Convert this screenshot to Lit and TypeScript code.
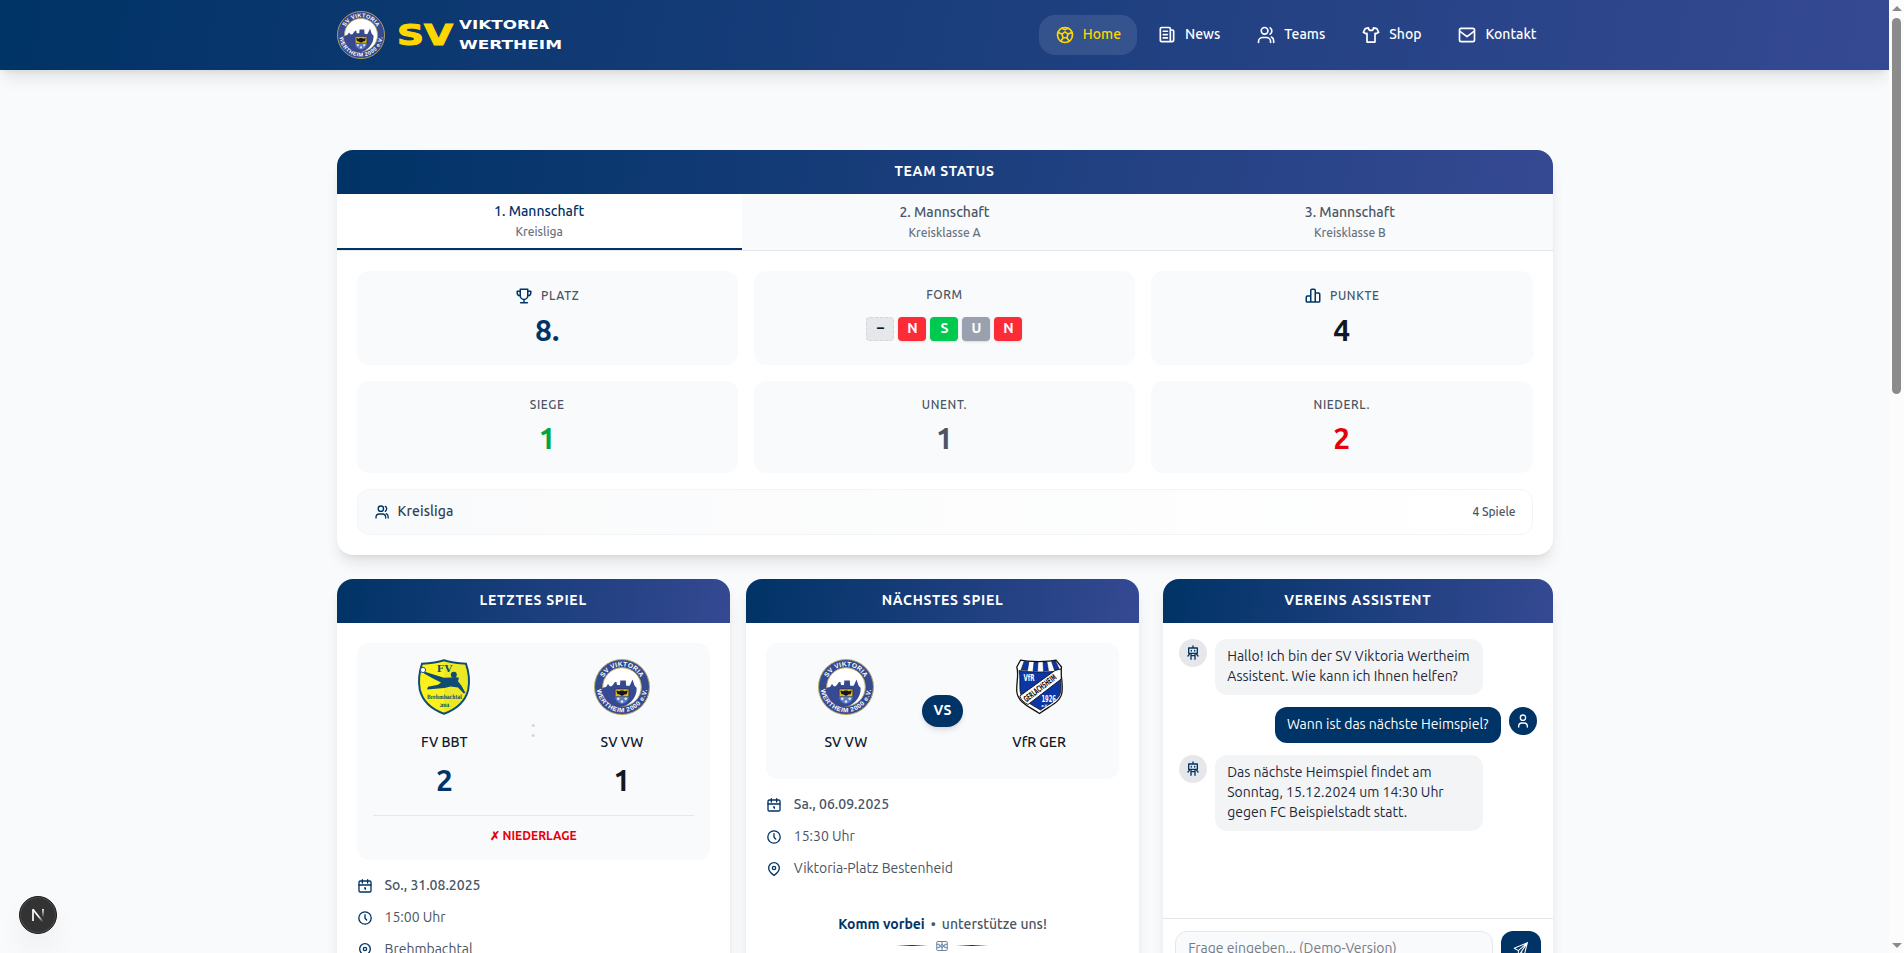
import { LitElement, html, svg, css } from "lit";
import { customElement } from "lit/decorators.js";

const GLYPHS = {
  ball: svg`<circle cx="12" cy="12" r="9"/><path d="M12 8.200 15.700 10.900l-1.400 4.400H9.700L8.300 10.900z"/><path d="M15.700 10.900l4.300-2M14.300 15.300l2.400 3.700M9.700 15.300l-2.400 3.700M8.300 10.900 4 8.900M8.300 4 12 5.600 15.700 4"/>`,
  news: svg`<path d="M16 20H5.500A1.500 1.500 0 0 1 4 18.500V4.500A1.500 1.500 0 0 1 5.500 3h9A1.500 1.500 0 0 1 16 4.500V20zM16 6h2.500A1.500 1.500 0 0 1 20 7.500V18a2 2 0 0 1-2 2h-3M7.500 7.500h5M7.500 11.500h5M7.500 15.500h5"/>`,
  group: svg`<circle cx="10.300" cy="7" r="4"/><path d="M3 21v-1a5 5 0 0 1 5-5h4.500a5 5 0 0 1 5 5v1M17 3.500a4.500 4.500 0 0 1 0 7.500M18.500 14.500a5 5 0 0 1 2.700 4.500v2"/>`,
  shirt: svg`<path d="M9 3.500 5 4.300 2.800 8.800l3.200 1.700L7.200 10V20.500h9.600V10l1.200.5 3.200-1.700L19 4.300l-4-.8a3 3 0 0 1-6 0z"/>`,
  mail: svg`<rect x="3" y="4" width="18" height="16" rx="2"/><path d="m4 8 8 6 8-6"/>`,
  trophy: svg`<path d="M7 3h10v8.500a5 5 0 0 1-10 0zM7 5.500H3v2.500A3.500 3.500 0 0 0 6.500 11.500H7M17 5.500h4v2.500a3.500 3.500 0 0 1-3.500 3.500H17M12 16.500V21M7.500 21h9"/>`,
  chart: svg`<path d="M9 20V4.500A1.500 1.500 0 0 1 10.500 3h3A1.500 1.500 0 0 1 15 4.500V20M9 12H4.500A1.500 1.500 0 0 0 3 13.500v5A1.500 1.500 0 0 0 4.500 20h15a1.500 1.500 0 0 0 1.500-1.500v-9A1.500 1.500 0 0 0 19.500 8H15"/>`,
  calendar: svg`<rect x="3" y="4.500" width="18" height="16.500" rx="2"/><path d="M3 10.500h18M8 2.500v5M16 2.500v5M11.300 15h1.200v2"/>`,
  clock: svg`<circle cx="12" cy="12" r="9.300"/><path d="M12 7V12.500l2.500 2.500"/>`,
  pin: svg`<path d="M12 21.500c4-2.700 8-6.500 8-11a8 8 0 0 0-16 0c0 4.500 4 8.300 8 11z"/><circle cx="12" cy="10.500" r="2.500"/>`,
  user: svg`<circle cx="12" cy="7" r="4"/><path d="M5.500 21v-1a5 5 0 0 1 5-5h3a5 5 0 0 1 5 5v1"/>`,
  robot: svg`<path d="M12 1.500v3M5.500 4.500h13v8h-13zM9.500 8v1M14.500 8v1M9 13v8.500M15 13v8.500M9 16h6M6.500 14 4.500 16.500M17.500 14l2 2.500"/>`,
  send: svg`<path d="M20.500 3.500 3 11l5.500 3.200zM20.500 3.500 16.500 19.500l-4.500-3zM20.500 3.500l-12 10.700v6l3.500-3.700"/>`,
  field: svg`<rect x="1.500" y="3" width="21" height="18" rx="1.500"/><path d="M12 3v18M2 8.500h4.500v7H2M22 8.500h-4.500v7h4.500"/><circle cx="12" cy="12" r="3"/>`,
};
type Glyph = keyof typeof GLYPHS;

const icon = (name: Glyph, size = 16, weight = 2) => html`
  <svg class="icon" width=${size} height=${size} viewBox="0 0 24 24" fill="none" stroke="currentColor"
    stroke-width=${weight} stroke-linecap="round" stroke-linejoin="round">${GLYPHS[name]}</svg>`;

const viktoriaCrest = (size: number) => html`
  <svg class="icon" width=${size} height=${size} viewBox="0 0 56 56">
    <defs>
      <path id="arc-top" d="M7.300 28a20.700 20.700 0 0 1 41.400 0"/>
      <path id="arc-bottom" d="M2.800 28a25.200 25.200 0 0 0 50.400 0"/>
    </defs>
    <circle cx="28" cy="28" r="27.500" fill="#364a91" stroke="#b5ab62" stroke-width="1"/>
    <circle cx="28" cy="28" r="19.300" fill="#fff" stroke="#b5ab62" stroke-width="1"/>
    <path fill="#364a91" d="M9.500 28.500 12 28l2-3 2 2.500 2-.5 3-4 1.500 0 .5 3h3l.3-4.500h5.500l.3 5 3 .5 1.200-1.500 2.200-5 2 6 2.200 2.500a18.800 18.800 0 0 1-37.400 3z"/>
    <path fill="#e0b91f" stroke="#1a1a1a" stroke-width=".5" d="M21.200 30h13.600v7.500H21.200z"/>
    <path fill="#15151c" d="m22.300 31.500 3.200.8 1-.8h3l1 .8 3.200-.8-1 3.600-2.200.4L28 37l-2.500-1.500-2.200-.4z"/>
    <path fill="#5f7dc0" d="M21.200 37.500h13.600c0 4-3 6.500-6.800 7.500-3.800-1-6.800-3.500-6.800-7.500z"/>
    <g fill="#dfe6f5"><circle cx="24.300" cy="39.800" r="1.300"/><circle cx="31.700" cy="39.800" r="1.300"/><circle cx="28" cy="42.500" r="1.300"/></g>
    <g class="crest-text" fill="#fff">
      <text font-size="6.600"><textPath href="#arc-top" startOffset="50%" text-anchor="middle" textLength="45">SV VIKTORIA</textPath></text>
      <text font-size="6.400"><textPath href="#arc-bottom" startOffset="50%" text-anchor="middle" textLength="73">WERTHEIM 2000 e.V.</textPath></text>
    </g>
  </svg>`;

const brehmbachtalCrest = () => html`
  <svg class="icon" width="56" height="56" viewBox="0 0 56 56">
    <path fill="#fbf21c" stroke="#0f4c75" stroke-width="2" d="M28 1.200c7 2.200 14 3 22 3.600 2.800 8 3.800 17 2.200 26C49.500 42 41 50 28 54.800 15 50 6.500 42 3.800 30.800 2.200 22 3.200 13 6 4.800 14 4.200 21 3.400 28 1.200z"/>
    <path fill="#d8db33" opacity=".45" d="M28 2.500c7 2 13.500 3 21 3.400 2.600 8 3.600 16 2 24.500C48.500 41 41 48.500 28 53.500z"/>
    <g fill="#0f4c75">
      <path d="m8 12.500 20 6.200 7-.2 3.500-.5 4.500.8-1 3.500 3.500 4.500 3.800 7-1.500.8L42 28.500l-7.500-1-6 1.500-17.500 1.500 1-2.800 10-2L25 23.500l-8-4-9-5z"/>
      <circle cx="37.800" cy="15.800" r="3"/>
    </g>
    <circle cx="7" cy="11" r="2.600" fill="#fff" stroke="#31507e" stroke-width="1"/>
    <g class="serif" fill="#0f4c75" text-anchor="middle" font-weight="700">
      <text x="28.500" y="12.800" font-size="10" textLength="15.500">FV</text>
      <text x="28.500" y="39.500" font-size="6" textLength="35" lengthAdjust="spacingAndGlyphs">Brehmbachtal</text>
      <text x="28.500" y="47.500" font-size="4.500" textLength="10">2014</text>
    </g>
  </svg>`;

const gerlachsheimCrest = () => html`
  <svg class="icon" width="56" height="56" viewBox="0 0 56 56">
    <path fill="#fff" stroke="#111" stroke-width="1.300" d="M9.500 1.200C17 3 38 3 45 1.200L50.500 8c-1.500 7 1.500 14 .6 24C50.500 43 40 46 28.500 54.500 17 47 6.500 43 5.700 32 5.500 22 8 15 5.800 8z"/>
    <path fill="#0a36a6" stroke="#111" stroke-width=".8" d="M8 11.500c12 2 30 2 41 0-.5 7 1.500 12 .8 20C49 41 40 43.500 29.500 51 19 44.500 9.500 41 9 31.500 8.500 24 9.500 18 8 11.500z"/>
    <g fill="#0a36a6" stroke="#111" stroke-width=".5"><path d="M13 2.500h5l-1.500 9L10 11zM23 3h4l-.5 9.300h-4.500zM32 3h4l1.500 8.800-5 .5zM40.500 2.600l4-.8 4 8.700-5 .8z"/></g>
    <path fill="#fff" stroke="#111" stroke-width=".9" d="M8.800 37 44 11.500l6-1.500.2 10L17 45.500c-4-2-7-4.500-8.200-8.500z"/>
    <text class="narrow" transform="translate(15.500 43.500) rotate(-38)" font-size="8.500" textLength="39" lengthAdjust="spacingAndGlyphs" fill="#111">GERLACHSHEIM</text>
    <g class="narrow" fill="#fff"><text x="12.500" y="22" font-size="8.500" textLength="11" lengthAdjust="spacingAndGlyphs">VfR</text>
    <text x="30.500" y="43" font-size="8.500" textLength="14.500" lengthAdjust="spacingAndGlyphs">1926</text><text x="30.500" y="47.500" font-size="3.500">e.V.</text></g>
  </svg>`;

const NAV: { label: string; glyph: Glyph; active?: boolean }[] = [
  { label: "Home", glyph: "ball", active: true },
  { label: "News", glyph: "news" },
  { label: "Teams", glyph: "group" },
  { label: "Shop", glyph: "shirt" },
  { label: "Kontakt", glyph: "mail" },
];

const TEAMS = [
  { name: "1. Mannschaft", league: "Kreisliga", active: true },
  { name: "2. Mannschaft", league: "Kreisklasse A", active: false },
  { name: "3. Mannschaft", league: "Kreisklasse B", active: false },
];

const FORM = [
  { mark: "–", kind: "none" },
  { mark: "N", kind: "loss" },
  { mark: "S", kind: "win" },
  { mark: "U", kind: "draw" },
  { mark: "N", kind: "loss" },
];

const CHAT = [
  { from: "bot", text: "Hallo! Ich bin der SV Viktoria Wertheim Assistent. Wie kann ich Ihnen helfen?" },
  { from: "me", text: "Wann ist das nächste Heimspiel?" },
  { from: "bot", text: "Das nächste Heimspiel findet am Sonntag, 15.12.2024 um 14:30 Uhr gegen FC Beispielstadt statt." },
];

@customElement("app-root")
export class AppRoot extends LitElement {
  static styles = css`
    :host { display: flex; height: 100vh; overflow: hidden; position: relative; background: #f9fafc;
      font-family: Ubuntu, "Noto Sans", sans-serif; font-size: 14px; line-height: 20px; color: #101828; }
    * { box-sizing: border-box; }
    .icon { display: block; flex: none; overflow: visible; }
    .crest-text { font-family: "Liberation Sans", sans-serif; font-weight: 700; }
    .serif { font-family: "DejaVu Serif", serif; }
    .narrow { font-family: "DejaVu Sans Condensed", sans-serif; font-weight: 700; }
    .view { flex: 1; min-width: 0; height: 100%; overflow: hidden; }
    .wrap { width: 1216px; margin: 0 auto; }
    .top { background: linear-gradient(100deg, #003366, #354992); height: 70px;
      box-shadow: 0 10px 15px -3px rgba(0,0,0,.1), 0 4px 6px -4px rgba(0,0,0,.1); }
    .top .wrap { height: 100%; display: flex; align-items: center; justify-content: space-between; }
    .brand { display: flex; align-items: center; gap: 12px; }
    .wordmark { display: block; font-family: "DejaVu Sans", sans-serif; font-weight: 700; }
    .nav { display: flex; gap: 4px; }
    .nav-item { display: flex; align-items: center; gap: 8px; height: 40px; padding: 0 16px; border-radius: 16px;
      color: #fff; font-weight: 500; }
    .nav-item .label { line-height: 20px; padding-bottom: 2px; }
    .nav-item.active { background: rgba(255,255,255,.1); color: #ffd700; }
    .content { padding-top: 80px; display: flex; flex-direction: column; gap: 24px; }
    .card { background: #fff; border-radius: 16px; overflow: hidden;
      box-shadow: 0 10px 15px -3px rgba(0,0,0,.1), 0 4px 6px -4px rgba(0,0,0,.1); }
    .card-title { background: linear-gradient(100deg, #003366, #354992); color: #fff; height: 44px; padding: 11px 0 13px;
      text-align: center; font-weight: 700; letter-spacing: .7px; text-transform: uppercase; }
    .tabs { display: grid; grid-template-columns: repeat(3, 1fr); border-bottom: 1px solid #e5e7eb; }
    .tab { height: 56px; padding-top: 8px; background: #f9fafb; text-align: center; color: #4a5565; font-weight: 500; }
    .tab.active { background: #fff; color: #003366; border-bottom: 2px solid #003366; padding-top: 7px; }
    .tab .league { font-size: 12px; line-height: 16px; margin-top: 3px; color: #6a7282; }
    .status { padding: 20px; display: grid; grid-template-columns: repeat(3, 1fr); gap: 16px; }
    .stat { background: #f9fafb; border-radius: 12px; padding: 16px; display: flex; flex-direction: column; align-items: center; gap: 8px; }
    .stat-label { display: flex; align-items: center; gap: 8px; font-size: 12px; line-height: 16px; letter-spacing: .6px; color: #4a5565; font-weight: 500; }
    .stat-label .icon { color: #003366; }
    .value { height: 36px; display: flex; align-items: center; font-size: 30px; line-height: 36px; font-weight: 700; padding-bottom: 2px; }
    .navy { color: #003366; } .green { color: #00a63e; } .gray { color: #4a5565; } .red { color: #e7000b; }
    .form { gap: 4px; font-size: 14px; line-height: 20px; padding: 0; }
    .mark { width: 28px; height: 24px; border-radius: 4px; display: flex; align-items: center; justify-content: center; color: #fff;
      padding-bottom: 2px; box-shadow: 0 1px 3px rgba(0,0,0,.1), 0 1px 2px -1px rgba(0,0,0,.1); }
    .mark.none { background: #e5e7eb; border: 1px dashed #d1d5dc; color: #101828; box-shadow: none; }
    .mark.loss { background: #fb2c36; } .mark.win { background: #00c950; } .mark.draw { background: #99a1af; }
    .league-row { grid-column: 1 / -1; height: 46px; padding: 0 16px; border: 1px solid #f3f4f6; border-radius: 12px; display: flex; align-items: center;
      background: linear-gradient(90deg, #f9fafb, #fff); gap: 8px; color: #364153; font-weight: 500; }
    .league-row .icon { color: #003366; }
    .league-row .name { flex: 1; padding-bottom: 2px; letter-spacing: .1px; }
    .league-row .games { font-size: 12px; color: #4a5565; }
    .columns { display: grid; grid-template-columns: 802.67px 1fr; gap: 24px; }
    .games-pair { display: grid; grid-template-columns: 1fr 1fr; gap: 16px; }
    .columns .card { height: 480px; }
    .match { padding: 20px; display: flex; flex-direction: column; gap: 16px; }
    .versus { background: #f9fafb; border-radius: 12px; padding: 16px; }
    .sides { display: flex; align-items: center; }
    .side { flex: 1; display: flex; flex-direction: column; align-items: center; }
    .side .name { margin: 17px 0 11px; font-weight: 500; }
    .side .score { font-size: 30px; line-height: 36px; font-weight: 700; margin: -1px 0 17px; }
    .colon { width: 34px; text-align: center; font-size: 24px; line-height: 32px; color: #d1d5dc; margin-bottom: 16px; }
    .vs { margin: 0 12px; width: 41px; height: 32px; border-radius: 16px; background: #003366; color: #fff; font-weight: 700; text-align: center;
      padding: 5px 0 7px; box-shadow: 0 4px 6px -1px rgba(0,0,0,.1), 0 2px 4px -2px rgba(0,0,0,.1); }
    .result { border-top: 1px solid #e5e7eb; padding-top: 12px; text-align: center; font-size: 12px; line-height: 16px; font-weight: 700; color: #e7000b; }
    .facts { display: flex; flex-direction: column; gap: 12px; color: #4a5565; }
    .fact { display: flex; align-items: center; gap: 12px; height: 20px; }
    .fact .icon { color: #003366; }
    .fact .text { padding-bottom: 2px; }
    .fact.strong { font-weight: 500; }
    .call { display: flex; justify-content: center; gap: 6px; margin-top: 19px; font-weight: 500; color: #4a5565; }
    .call b { font-weight: 700; color: #003366; }
    .rule { display: flex; align-items: center; justify-content: center; gap: 8px; margin-top: -11px; height: 13px; color: #003366; }
    .rule .line { width: 32px; height: 1px; background: linear-gradient(90deg, transparent, #003366, transparent); }
    .rule .icon { opacity: .6; }
    .assistant { display: flex; flex-direction: column; }
    .chat { height: 295px; padding: 16px; display: flex; flex-direction: column; gap: 12px; }
    .msg { display: flex; gap: 8px; align-items: flex-start; }
    .msg.me { flex-direction: row-reverse; }
    .avatar { width: 28px; height: 28px; border-radius: 50%; flex: none; background: #e5e7eb; color: #003366; display: flex; align-items: center; justify-content: center; }
    .me .avatar { background: #003366; color: #fff; }
    .bubble { max-width: 268px; border-radius: 12px; padding: 7px 12px 9px; background: #f3f4f6; color: #1e2939; }
    .me .bubble { background: #003366; color: #fff; }
    .ask { border-top: 1px solid #e5e7eb; padding: 12px; display: flex; gap: 8px; }
    .input { flex: 1; height: 36px; border: 1px solid #e5e7eb; border-radius: 12px; background: #f9fafb; padding: 6px 12px; color: #757b87; }
    .send { width: 40px; height: 36px; border-radius: 12px; background: #003366; color: #fff; display: flex; align-items: center; justify-content: center; }
    .scrollbar { width: 15px; background: #fcfcfc; display: flex; flex-direction: column; align-items: center; padding: 6px 0 5px; }
    .thumb { width: 9px; height: 376px; border-radius: 5px; background: #8b8b8b; margin: 7px 0 auto; }
    .up, .down { border: 5px solid transparent; border-top-width: 0; border-bottom: 5px solid #8b8b8b; }
    .down { transform: rotate(180deg); }
    .dev { position: absolute; left: 19px; top: 896px; width: 38px; height: 38px; border-radius: 50%; background: #333; border: 1px solid #1c1c1c;
      box-shadow: inset 0 0 0 1px #4d4d4d, 0 16px 32px -8px rgba(0,0,0,.14); display: flex; align-items: center; justify-content: center; }
  `;

  private fact(glyph: Glyph, text: string, strong = false) {
    return html`<div class="fact ${strong ? "strong" : ""}">${icon(glyph)}<span class="text">${text}</span></div>`;
  }

  private stat(label: string, value: string, tone: string, glyph?: Glyph) {
    return html`<div class="stat">
      <div class="stat-label">${glyph ? icon(glyph, 18) : ""}<span>${label}</span></div>
      <div class="value ${tone}">${value}</div>
    </div>`;
  }

  render() {
    return html`
      <div class="view">
        <header class="top"><div class="wrap">
          <div class="brand">
            ${viktoriaCrest(48)}
            <svg class="wordmark" width="166" height="48" viewBox="0 0 166 48">
              <text x="0" y="34" font-size="29" fill="#ffd700" stroke="#ffd700" stroke-width="1" textLength="56" lengthAdjust="spacingAndGlyphs">SV</text>
              <text x="62" y="18" font-size="12.600" fill="#fff" textLength="90" lengthAdjust="spacingAndGlyphs">VIKTORIA</text>
              <text x="62" y="38" font-size="12.600" fill="#fff" textLength="103" lengthAdjust="spacingAndGlyphs">WERTHEIM</text>
            </svg>
          </div>
          <nav class="nav">${NAV.map((n) => html`<a class="nav-item ${n.active ? "active" : ""}">${icon(n.glyph, 20)}<span class="label">${n.label}</span></a>`)}</nav>
        </div></header>

        <main class="wrap content">
          <section class="card">
            <div class="card-title">Team Status</div>
            <div class="tabs">${TEAMS.map((t) => html`<div class="tab ${t.active ? "active" : ""}"><div>${t.name}</div><div class="league">${t.league}</div></div>`)}</div>
            <div class="status">
              ${this.stat("PLATZ", "8.", "navy", "trophy")}
              <div class="stat"><div class="stat-label">FORM</div>
                <div class="value form">${FORM.map((f) => html`<span class="mark ${f.kind}">${f.mark}</span>`)}</div></div>
              ${this.stat("PUNKTE", "4", "", "chart")}
              ${this.stat("SIEGE", "1", "green")}
              ${this.stat("UNENT.", "1", "gray")}
              ${this.stat("NIEDERL.", "2", "red")}
              <div class="league-row">${icon("group")}<span class="name">Kreisliga</span><span class="games">4 Spiele</span></div>
            </div>
          </section>

          <div class="columns">
            <div class="games-pair">
              <section class="card">
                <div class="card-title">Letztes Spiel</div>
                <div class="match">
                  <div class="versus">
                    <div class="sides">
                      <div class="side">${brehmbachtalCrest()}<div class="name">FV BBT</div><div class="score navy">2</div></div>
                      <div class="colon">:</div>
                      <div class="side">${viktoriaCrest(56)}<div class="name">SV VW</div><div class="score">1</div></div>
                    </div>
                    <div class="result">✗ NIEDERLAGE</div>
                  </div>
                  <div class="facts">
                    ${this.fact("calendar", "So., 31.08.2025", true)}
                    ${this.fact("clock", "15:00 Uhr")}
                    ${this.fact("pin", "Brehmbachtal")}
                  </div>
                </div>
              </section>
              <section class="card">
                <div class="card-title">Nächstes Spiel</div>
                <div class="match">
                  <div class="versus">
                    <div class="sides">
                      <div class="side">${viktoriaCrest(56)}<div class="name">SV VW</div></div>
                      <div class="vs">VS</div>
                      <div class="side">${gerlachsheimCrest()}<div class="name">VfR GER</div></div>
                    </div>
                  </div>
                  <div class="facts">
                    ${this.fact("calendar", "Sa., 06.09.2025", true)}
                    ${this.fact("clock", "15:30 Uhr")}
                    ${this.fact("pin", "Viktoria-Platz Bestenheid")}
                  </div>
                  <div class="call"><b>Komm vorbei</b><span>•</span><span>unterstütze uns!</span></div>
                  <div class="rule"><span class="line"></span>${icon("field", 12)}<span class="line"></span></div>
                </div>
              </section>
            </div>
            <section class="card assistant">
              <div class="card-title">Vereins Assistent</div>
              <div class="chat">${CHAT.map((m) => html`<div class="msg ${m.from}">
                <div class="avatar">${icon(m.from === "bot" ? "robot" : "user", 16)}</div>
                <div class="bubble">${m.text}</div></div>`)}</div>
              <div class="ask"><div class="input">Frage eingeben... (Demo-Version)</div><div class="send">${icon("send", 18, 1.4)}</div></div>
            </section>
          </div>
        </main>
      </div>
      <div class="scrollbar"><div class="up"></div><div class="thumb"></div><div class="down"></div></div>
      <div class="dev">
        <svg class="icon" width="14" height="14" viewBox="0 0 14 14" fill="none" stroke-width="1.700">
          <defs>
            <linearGradient id="fade-d" x1="8" y1="8" x2="12.500" y2="13.500" gradientUnits="userSpaceOnUse"><stop stop-color="#fff"/><stop offset="1" stop-color="#fff" stop-opacity="0"/></linearGradient>
            <linearGradient id="fade-v" x1="0" y1="1" x2="0" y2="9.500" gradientUnits="userSpaceOnUse"><stop stop-color="#fff"/><stop offset="1" stop-color="#fff" stop-opacity="0"/></linearGradient>
          </defs>
          <path stroke="#fff" d="M2 13V1.500"/><path stroke="url(#fade-d)" d="m1.800 1.200 10.400 13"/><path stroke="url(#fade-v)" d="M12 1v9"/>
        </svg>
      </div>`;
  }
}
